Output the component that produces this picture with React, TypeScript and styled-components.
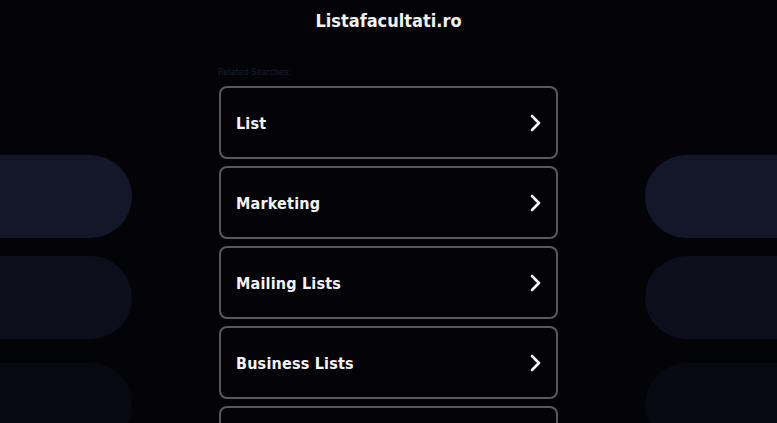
import styled, { createGlobalStyle } from 'styled-components'

const GlobalStyle = createGlobalStyle`
  html, body {
    margin: 0;
    padding: 0;
    background: #040408;
  }
  body {
    font-family: "DejaVu Sans Condensed", "DejaVu Sans", sans-serif;
    color: #fff;
    overflow: hidden;
  }
`

const Page = styled.div`
  width: 777px;
  height: 423px;
  overflow: hidden;
  display: flex;
  flex-direction: column;
`

const Title = styled.h1`
  margin: 0;
  padding-top: 10px;
  font-size: 18px;
  line-height: 22px;
  font-weight: 700;
  text-align: center;
  color: #f2f2f2;
`

const Body = styled.div`
  display: grid;
  grid-template-columns: 1fr 339px 1fr;
`

const Side = styled.div<{ $right?: boolean }>`
  display: flex;
  flex-direction: column;
  align-items: ${(p) => (p.$right ? 'flex-end' : 'flex-start')};
  gap: 18px;
  padding-top: 123px;
`

const Pill = styled.div<{ $tone: string; $right?: boolean }>`
  width: 132px;
  height: 83px;
  flex-shrink: 0;
  background: ${(p) => p.$tone};
  border-radius: ${(p) => (p.$right ? '42px 0 0 42px' : '0 42px 42px 0')};

  &:nth-child(3) {
    margin-top: 6px;
  }
`

const Center = styled.div`
  padding-top: 34px;
`

const Label = styled.div`
  font-size: 9px;
  line-height: 12px;
  color: #1a1c36;
  margin: 0 0 8px -1px;
`

const List = styled.ul`
  list-style: none;
  margin: 0;
  padding: 0;
  display: flex;
  flex-direction: column;
  gap: 7px;
`

const Card = styled.li`
  box-sizing: border-box;
  height: 73px;
  border: 2px solid #59595d;
  border-radius: 8px;
  display: flex;
  align-items: center;
  justify-content: space-between;
  padding: 1px 15px 0;
  flex-shrink: 0;
`

const CardText = styled.span`
  font-size: 16px;
  font-weight: 700;
  letter-spacing: 0.2px;
  color: #f4f4f4;
`

const Chevron = () => (
  <svg width="12" height="18" viewBox="0 0 12 18">
    <polyline
      points="3,2 10,9 3,16"
      fill="none"
      stroke="#ffffff"
      strokeWidth="2.6"
      strokeLinecap="round"
      strokeLinejoin="round"
    />
  </svg>
)

const tones = ['#141729', '#0c0e1c', '#070811']
const items = ['List', 'Marketing', 'Mailing Lists', 'Business Lists', 'Email Lists']

const App = () => {
  return (
    <Page>
      <GlobalStyle />
      <Title>Listafacultati.ro</Title>
      <Body>
        <Side>
          {tones.map((t) => (
            <Pill key={t} $tone={t} />
          ))}
        </Side>
        <Center>
          <Label>Related Searches:</Label>
          <List>
            {items.map((item) => (
              <Card key={item}>
                <CardText>{item}</CardText>
                <Chevron />
              </Card>
            ))}
          </List>
        </Center>
        <Side $right>
          {tones.map((t) => (
            <Pill key={t} $tone={t} $right />
          ))}
        </Side>
      </Body>
    </Page>
  )
}

export default App
